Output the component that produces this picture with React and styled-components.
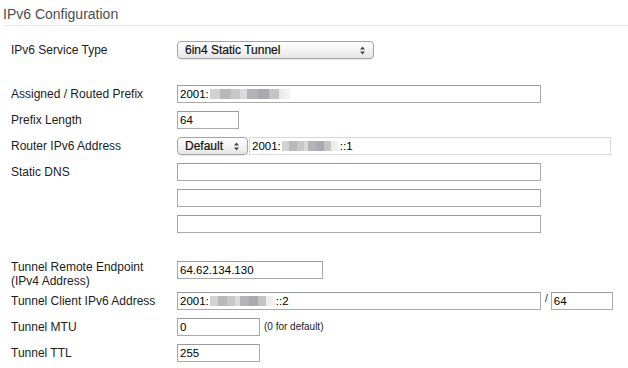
import styled, { createGlobalStyle } from "styled-components";

const GlobalStyle = createGlobalStyle`
  * { box-sizing: border-box; }
  body {
    margin: 0;
    background: #fff;
    font-family: "Liberation Sans", Arial, sans-serif;
  }
`;

function Arrows() {
  return (
    <svg width="5" height="9" viewBox="0 0 5 9">
      <path d="M2.5 0.5 L5 3.5 L0 3.5 Z" fill="#444" />
      <path d="M0 5.5 L5 5.5 L2.5 8.5 Z" fill="#444" />
    </svg>
  );
}

function Select({ width, children }) {
  return (
    <SelectBox $width={width}>
      <span>{children}</span>
      <Arrows />
    </SelectBox>
  );
}

export default function App() {
  return (
    <>
      <GlobalStyle />
      <Panel>
        <Title>IPv6 Configuration</Title>
        <Form>
          <Row $after={26}>
            <Label>IPv6 Service Type</Label>
            <Select width={197}>6in4 Static Tunnel</Select>
          </Row>

          <Row>
            <Label>Assigned / Routed Prefix</Label>
            <Field $width={364}>
              2001:<Redact $width={80} />
            </Field>
          </Row>
          <Row>
            <Label>Prefix Length</Label>
            <Field $width={62}>64</Field>
          </Row>
          <Row>
            <Label>Router IPv6 Address</Label>
            <Inline>
              <Select width={71}>Default</Select>
              <Field $width={362} $light>
                2001:<Redact $width={57} />::1
              </Field>
            </Inline>
          </Row>
          <Row $after={28}>
            <Label>Static DNS</Label>
            <Stack>
              <Field $width={364} />
              <Field $width={364} />
              <Field $width={364} />
            </Stack>
          </Row>

          <Row $after={4}>
            <Label $multi>
              Tunnel Remote Endpoint
              <br />
              (IPv4 Address)
            </Label>
            <Field $width={146}>64.62.134.130</Field>
          </Row>
          <Row>
            <Label>Tunnel Client IPv6 Address</Label>
            <Inline>
              <Field $width={364}>
                2001:<Redact $width={65} />::2
              </Field>
              <Slash>/</Slash>
              <Field $width={62}>64</Field>
            </Inline>
          </Row>
          <Row>
            <Label>Tunnel MTU</Label>
            <Inline>
              <Field $width={83}>0</Field>
              <Hint>(0 for default)</Hint>
            </Inline>
          </Row>
          <Row>
            <Label>Tunnel TTL</Label>
            <Field $width={83}>255</Field>
          </Row>
        </Form>
      </Panel>
    </>
  );
}

const Panel = styled.div`
  width: 628px;
  height: 368px;
  overflow: hidden;
`;

const Title = styled.h2`
  margin: 0 0 0 3px;
  padding-top: 3px;
  font-size: 14px;
  line-height: 22px;
  font-weight: normal;
  color: #4d4d4d;
  border-bottom: 1px solid #e8e8e8;
`;

const Form = styled.div`
  padding-top: 15px;
  display: flex;
  flex-direction: column;
`;

const Row = styled.div`
  display: flex;
  align-items: flex-start;
  margin-bottom: ${(p) => p.$after ?? 8}px;
`;

const Label = styled.div`
  width: 177px;
  padding-left: 11px;
  flex-shrink: 0;
  font-size: 12px;
  color: #1c1c1c;
  line-height: ${(p) => (p.$multi ? "14px" : "18px")};
  margin-top: ${(p) => (p.$multi ? "-1px" : "0")};
`;

const Inline = styled.div`
  display: flex;
  align-items: flex-start;
  gap: 1px;
`;

const Stack = styled.div`
  display: flex;
  flex-direction: column;
  gap: 8px;
`;

const SelectBox = styled.div`
  width: ${(p) => p.$width}px;
  height: 18px;
  display: flex;
  align-items: center;
  justify-content: space-between;
  padding: 0 8px 0 7px;
  border: 1px solid #a3a3a3;
  border-radius: 4px;
  background: linear-gradient(#ffffff, #f1f1f1 60%, #e6e6e6);
  box-shadow: 0 1px 1px rgba(0, 0, 0, 0.08);
  font-size: 12px;
  color: #111;
  -webkit-text-stroke: 0.2px #111;
`;

const Field = styled.div`
  width: ${(p) => p.$width}px;
  height: 18px;
  display: flex;
  align-items: center;
  padding: 0 2px;
  border: 1px solid ${(p) => (p.$light ? "#dcdcdc" : "#a9a9a9")};
  border-top-color: ${(p) => (p.$light ? "#d6d6d6" : "#9a9a9a")};
  background: #fff;
  font-size: 11.5px;
  color: #000;
  white-space: nowrap;
`;

const Redact = styled.span`
  display: inline-block;
  width: ${(p) => p.$width}px;
  height: 10px;
  margin: 0 1px;
  background: linear-gradient(
    90deg,
    #d2d2d2 0%,
    #d2d2d2 12%,
    #b8b8b8 12%,
    #b8b8b8 26%,
    #c8c8c8 26%,
    #c8c8c8 38%,
    #dadada 38%,
    #dadada 46%,
    #b4b4b8 46%,
    #b4b4b8 60%,
    #a9a9b0 60%,
    #a9a9b0 74%,
    #c4c4c4 74%,
    #c4c4c4 86%,
    #e9e9e9 86%,
    #f4f4f4 100%
  );
  filter: blur(0.6px);
`;

const Slash = styled.span`
  font-size: 10px;
  line-height: 10px;
  color: #222;
  padding: 2px 2px 0 3px;
`;

const Hint = styled.span`
  font-size: 10px;
  line-height: 18px;
  color: #222;
  margin-left: 3px;
`;
